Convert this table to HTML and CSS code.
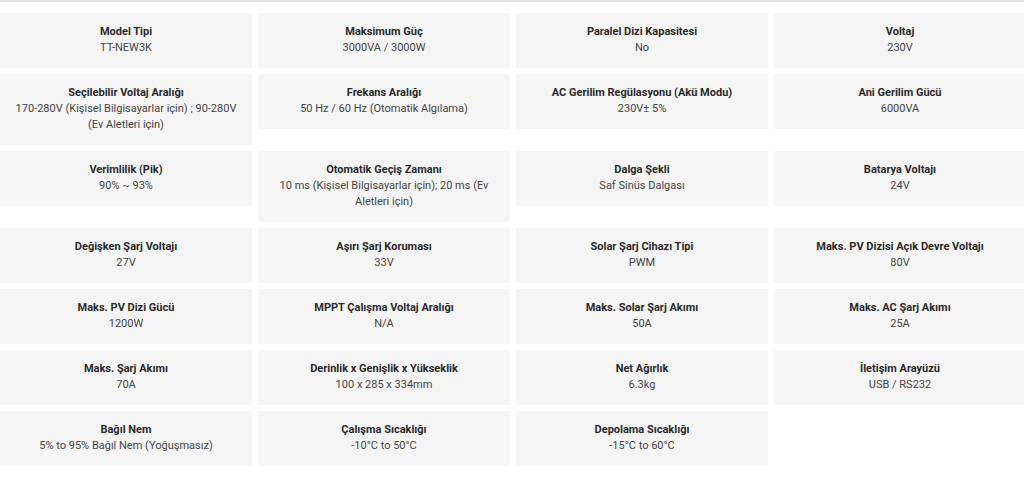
FILE: index.html
```html
<!DOCTYPE html>
<html lang="tr">
<head>
<meta charset="utf-8">
<title>Teknik Özellikler</title>
<link rel="stylesheet" href="styles.css">
</head>
<body>
<div class="specs">
  <div class="cell"><div class="name">Model Tipi</div><div class="val">TT-NEW3K</div></div>
  <div class="cell"><div class="name">Maksimum Güç</div><div class="val">3000VA / 3000W</div></div>
  <div class="cell"><div class="name">Paralel Dizi Kapasitesi</div><div class="val">No</div></div>
  <div class="cell"><div class="name">Voltaj</div><div class="val">230V</div></div>

  <div class="cell"><div class="name">Seçilebilir Voltaj Aralığı</div><div class="val">170-280V (Kişisel Bilgisayarlar için) ; 90-280V (Ev Aletleri için)</div></div>
  <div class="cell"><div class="name">Frekans Aralığı</div><div class="val">50 Hz / 60 Hz (Otomatik Algılama)</div></div>
  <div class="cell"><div class="name">AC Gerilim Regülasyonu (Akü Modu)</div><div class="val">230V± 5%</div></div>
  <div class="cell"><div class="name">Ani Gerilim Gücü</div><div class="val">6000VA</div></div>

  <div class="cell"><div class="name">Verimlilik (Pik)</div><div class="val">90% ~ 93%</div></div>
  <div class="cell"><div class="name">Otomatik Geçiş Zamanı</div><div class="val">10 ms (Kişisel Bilgisayarlar için); 20 ms (Ev Aletleri için)</div></div>
  <div class="cell"><div class="name">Dalga Şekli</div><div class="val">Saf Sinüs Dalgası</div></div>
  <div class="cell"><div class="name">Batarya Voltajı</div><div class="val">24V</div></div>

  <div class="cell"><div class="name">Değişken Şarj Voltajı</div><div class="val">27V</div></div>
  <div class="cell"><div class="name">Aşırı Şarj Koruması</div><div class="val">33V</div></div>
  <div class="cell"><div class="name">Solar Şarj Cihazı Tipi</div><div class="val">PWM</div></div>
  <div class="cell"><div class="name">Maks. PV Dizisi Açık Devre Voltajı</div><div class="val">80V</div></div>

  <div class="cell"><div class="name">Maks. PV Dizi Gücü</div><div class="val">1200W</div></div>
  <div class="cell"><div class="name">MPPT Çalışma Voltaj Aralığı</div><div class="val">N/A</div></div>
  <div class="cell"><div class="name">Maks. Solar Şarj Akımı</div><div class="val">50A</div></div>
  <div class="cell"><div class="name">Maks. AC Şarj Akımı</div><div class="val">25A</div></div>

  <div class="cell"><div class="name">Maks. Şarj Akımı</div><div class="val">70A</div></div>
  <div class="cell"><div class="name">Derinlik x Genişlik x Yükseklik</div><div class="val">100 x 285 x 334mm</div></div>
  <div class="cell"><div class="name">Net Ağırlık</div><div class="val">6.3kg</div></div>
  <div class="cell"><div class="name">İletişim Arayüzü</div><div class="val">USB / RS232</div></div>

  <div class="cell"><div class="name">Bağıl Nem</div><div class="val">5% to 95% Bağıl Nem (Yoğuşmasız)</div></div>
  <div class="cell"><div class="name">Çalışma Sıcaklığı</div><div class="val">-10°C to 50°C</div></div>
  <div class="cell"><div class="name">Depolama Sıcaklığı</div><div class="val">-15°C to 60°C</div></div>
</div>
</body>
</html>
```

FILE: styles.css
```css
html, body {
  margin: 0;
  padding: 0;
  background: #fff;
  overflow: hidden;
}
body {
  font-family: Roboto, "Liberation Sans", Arial, sans-serif;
  border-top: 2px solid #e4e4e4;
  padding-top: 11px;
}
.specs {
  width: 1026px;
  display: grid;
  grid-template-columns: repeat(4, 252px);
  column-gap: 6px;
  row-gap: 6px;
  align-items: start;
}
.cell {
  background: #f5f5f5;
  text-align: center;
  padding: 11px 10px 12px;
  font-size: 11px;
  line-height: 16px;
}
.name {
  font-weight: 700;
  color: #2a2a2a;
}
.val {
  color: #444;
}
```
